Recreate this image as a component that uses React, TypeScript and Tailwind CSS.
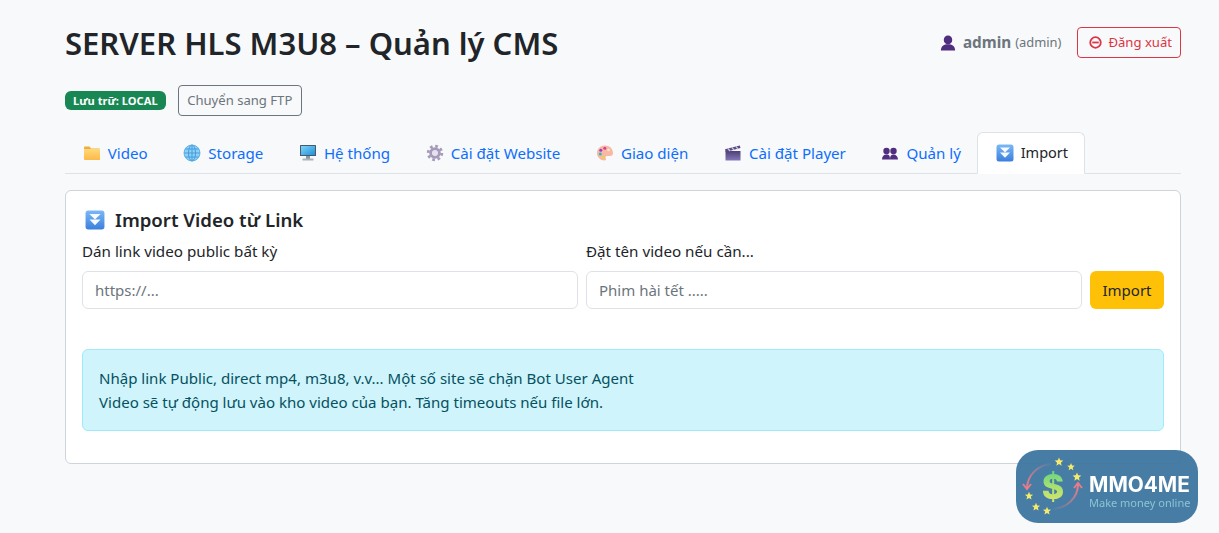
import React from "react";

const Tab = ({ icon, label, active }: { icon: React.ReactNode; label: string; active?: boolean }) => (
  <div className={active ? "flex items-center h-[42px] -ml-[2px] pl-[18px] pr-[16px] gap-[7px] text-[14.500px] rounded-t-[6px] border border-[#dee2e6] border-b-white bg-white text-[#212529] -mb-px" : "flex items-center h-[42px] pt-[2px] px-[17.800px] gap-[7px] text-[#0d6efd]"}>
    <span className="w-[18px] h-[18px] flex items-center justify-center">{icon}</span>
    <span>{label}</span>
  </div>
);

const Folder = () => (
  <svg width="18" height="18" viewBox="0 0 18 18">
    <defs><linearGradient id="fo" x1="0" y1="0" x2="0" y2="1"><stop offset="0" stopColor="#ffd978" /><stop offset="1" stopColor="#fdb94a" /></linearGradient></defs>
    <path d="M1 3.500a1 1 0 0 1 1-1h4.500l1.500 2h8a1 1 0 0 1 1 1V5.500H1z" fill="#f0ad3c" />
    <path d="M1 5h16v11H2a1 1 0 0 1-1-1z" fill="url(#fo)" />
  </svg>
);
const Globe = () => (
  <svg width="18" height="18" viewBox="0 0 18 18" fill="none">
    <circle cx="9" cy="9" r="8" fill="#8fd0f5" />
    <ellipse cx="9" cy="9" rx="3.500" ry="8" stroke="#3f98dc" strokeWidth=".9" />
    <path d="M9 1v16M1 9h16M2.200 5h13.600M2.200 13h13.600" stroke="#3f98dc" strokeWidth=".9" />
    <circle cx="9" cy="9" r="8" stroke="#4fa6e2" strokeWidth=".8" />
  </svg>
);
const Monitor = () => (
  <svg width="18" height="18" viewBox="0 0 18 18">
    <defs><linearGradient id="mo" x1="0" y1="0" x2="1" y2="1"><stop offset="0" stopColor="#7fd4f7" /><stop offset="1" stopColor="#1f8fdc" /></linearGradient></defs>
    <rect x="1" y="1" width="16" height="11" rx=".5" fill="#475a6c" />
    <rect x="2" y="2" width="14" height="9" fill="url(#mo)" />
    <rect x="7" y="12" width="4" height="3" fill="#8a96a2" />
    <rect x="3.500" y="14.500" width="11" height="2" rx=".5" fill="#aab4bd" />
  </svg>
);
const Gear = () => (
  <svg width="18" height="18" viewBox="0 0 18 18">
    <circle cx="9" cy="9" r="6.800" fill="none" stroke="#a69abb" strokeWidth="2.800" strokeDasharray="2.700 2.640" />
    <circle cx="9" cy="9" r="4.300" fill="none" stroke="#a69abb" strokeWidth="3" />
    <circle cx="9" cy="9" r="2.800" fill="#e5e0ee" />
  </svg>
);
const Palette = () => (
  <svg width="18" height="18" viewBox="0 0 18 18">
    <path d="M9 1.500C4.500 1.500 1 4.800 1 9s3.400 7.500 7.500 7.500c1.600 0 1.800-1.200 1.200-2.200-.7-1.200.1-2.300 1.400-2.300H14c1.900 0 3-1.300 3-3C17 4.500 13.500 1.500 9 1.500z" fill="#f7b9a3" />
    <circle cx="8.800" cy="4.300" r="1.500" fill="#e0399a" />
    <circle cx="4.800" cy="6.200" r="1.500" fill="#9a3fc4" />
    <circle cx="4.300" cy="10" r="1.500" fill="#2fb5c4" />
    <circle cx="7.300" cy="13.300" r="1.400" fill="#f0cf3c" />
    <circle cx="12.500" cy="6" r="1.300" fill="#fbe3da" />
  </svg>
);
const Clapper = () => (
  <svg width="18" height="18" viewBox="0 0 18 18">
    <defs><linearGradient id="cl" x1="0" y1="0" x2="0" y2="1"><stop offset="0" stopColor="#4d3f75" /><stop offset="1" stopColor="#8678b8" /></linearGradient></defs>
    <rect x="1.500" y="7" width="15" height="9.500" fill="url(#cl)" />
    <path d="M1 5.200l14.800-3.700.7 2.600L1.700 8z" fill="#5a4b85" />
    <path d="M4 4.500l2 2.700M8 3.500l2 2.700M12 2.500l2 2.700" stroke="#c9c2df" strokeWidth="1.300" />
  </svg>
);
const People = () => (
  <svg width="18" height="18" viewBox="0 0 18 18" fill="#4f2d7f">
    <circle cx="5.500" cy="7" r="3.200" />
    <circle cx="12.500" cy="7" r="3.200" />
    <path d="M1 15.500c0-3 1.500-5 4.500-5s3.500 1.500 3.500 5zM9 15.500c0-3.500 1-5 3.500-5s4.500 2 4.500 5z" />
  </svg>
);
const DoubleDown = ({ s = 18 }: { s?: number }) => (
  <svg width={s} height={s} viewBox="0 0 18 18">
    <defs><linearGradient id={`dd${s}`} x1="0" y1="0" x2="0" y2="1"><stop offset="0" stopColor="#7cb8f5" /><stop offset="1" stopColor="#3a7fdc" /></linearGradient></defs>
    <rect x="0.500" y="0.500" width="17" height="17" rx="2.500" fill={`url(#dd${s})`} />
    <path d="M4 3.500h10L9 8.500z" fill="#f7fbff" />
    <path d="M4 8.500h10L9 13.800z" fill="#f7fbff" />
  </svg>
);
const Star = ({ x, y, r = 4 }: { x: number; y: number; r?: number }) => {
  const pts = Array.from({ length: 10 }, (_, i) => {
    const a = -Math.PI / 2 + (i * Math.PI) / 5;
    const q = i % 2 ? r * 0.45 : r;
    return `${x + q * Math.cos(a)},${y + q * Math.sin(a)}`;
  }).join(" ");
  return <polygon points={pts} fill="#f6ea6c" />;
};

export default function App() {
  return (
    <div className="min-h-[533px] bg-[#f8f9fa] px-[65px] text-[15.100px] text-[#212529] font-['Noto_Sans','Open_Sans',sans-serif]">
      <div className="w-[1116px]">
        <header className="flex items-start justify-between pt-[21px] h-[85px]">
          <h1 className="text-[31px] leading-[44px] font-semibold">SERVER HLS M3U8 – Quản lý CMS</h1>
          <div className="flex items-center gap-[16px] pt-[6px]">
            <div className="flex items-center text-[#6c757d]">
              <svg width="16" height="16" viewBox="0 0 18 18" fill="#4f2d7f" className="mr-[7px]">
                <circle cx="9" cy="5.500" r="4.800" />
                <path d="M1 17.500c0-5 3.500-7 8-7s8 2 8 7z" />
              </svg>
              <span className="text-[15.300px] font-bold mr-[4px]">admin</span>
              <span className="text-[12.900px]">(admin)</span>
            </div>
            <button className="flex items-center gap-[6px] h-[31px] pl-[11px] pr-[8px] text-[13.100px] text-[#dc3545] border border-[#dc3545] rounded-[4px]">
              <svg width="13" height="13" viewBox="0 0 16 16" fill="none" stroke="#dc3545" strokeWidth="2.200">
                <circle cx="8" cy="8" r="6.500" />
                <path d="M4 8h8" />
              </svg>
              Đăng xuất
            </button>
          </div>
        </header>
        <div className="flex items-center gap-[12px] h-[31px]">
          <span className="px-[8px] py-[3px] rounded-[6px] bg-[#198754] text-white text-[11.100px] leading-[13px] font-bold">Lưu trữ: LOCAL</span>
          <button className="h-[31px] px-[8.500px] text-[13.100px] text-[#6c757d] border border-[#6c757d] rounded-[4px]">Chuyển sang FTP</button>
        </div>
        <nav className="flex items-end h-[42px] mt-[16px] border-b border-[#dee2e6]">
          <Tab icon={<Folder />} label="Video" />
          <Tab icon={<Globe />} label="Storage" />
          <Tab icon={<Monitor />} label="Hệ thống" />
          <Tab icon={<Gear />} label="Cài đặt Website" />
          <Tab icon={<Palette />} label="Giao diện" />
          <Tab icon={<Clapper />} label="Cài đặt Player" />
          <Tab icon={<People />} label="Quản lý" />
          <Tab icon={<DoubleDown />} label="Import" active />
        </nav>
        <section className="mt-[16px] h-[274px] bg-white border border-[#ced4da] rounded-[6px] px-[16px] pt-[15px]">
          <h2 className="flex items-center gap-[10px] pl-[3px] text-[18.600px] leading-[27px] font-semibold">
            <DoubleDown s={20} />
            Import Video từ Link
          </h2>
          <div className="flex items-end gap-[8px] mt-[6px]">
            <label className="flex-1">
              <div className="text-[15.200px] leading-[24px] mb-[8px]">Dán link video public bất kỳ</div>
              <input readOnly placeholder="https://..." className="w-full h-[38px] px-[12px] text-[15px] border border-[#dee2e6] rounded-[6px] bg-white placeholder:text-[#6c757d] outline-none" />
            </label>
            <label className="flex-1">
              <div className="text-[15.200px] leading-[24px] mb-[8px]">Đặt tên video nếu cần...</div>
              <input readOnly placeholder="Phim hài tết ....." className="w-full h-[38px] px-[12px] text-[15px] border border-[#dee2e6] rounded-[6px] bg-white placeholder:text-[#6c757d] outline-none" />
            </label>
            <button className="h-[38px] w-[74px] bg-[#ffc107] rounded-[6px] text-[15px] text-[#212529]">Import</button>
          </div>
          <div className="mt-[40px] h-[82px] px-[16px] py-[16px] bg-[#cff4fc] border border-[#9eeaf9] rounded-[6px] text-[#055160] text-[15.050px] leading-[24px]">
            <div>Nhập link Public, direct mp4, m3u8, v.v... Một số site sẽ chặn Bot User Agent</div>
            <div>Video sẽ tự động lưu vào kho video của bạn. Tăng timeouts nếu file lớn.</div>
          </div>
        </section>
      </div>
      <div className="fixed left-[1016px] top-[450px] w-[182px] h-[73px] rounded-[22px] bg-[#3d769f]/95 flex items-center overflow-hidden">
        <svg width="73" height="73" viewBox="0 0 73 73" className="shrink-0" fill="none">
          <defs>
            <linearGradient id="dl" x1="0" y1="0" x2="0" y2="1"><stop offset="0" stopColor="#4fd08a" /><stop offset=".5" stopColor="#a8e070" /><stop offset="1" stopColor="#e4e86a" /></linearGradient>
            <linearGradient id="a1" x1="1" y1="0" x2="0" y2="1"><stop offset="0" stopColor="#4f7fa6" /><stop offset="1" stopColor="#f27a88" /></linearGradient>
            <linearGradient id="a2" x1="0" y1="1" x2="1" y2="0"><stop offset="0" stopColor="#4f7fa6" /><stop offset="1" stopColor="#f27a88" /></linearGradient>
          </defs>
          <path d="M35 14C22 15 11 25 11 39" stroke="url(#a1)" strokeWidth="2" />
          <path d="M7 34l4 5 4-5" stroke="#f27a88" strokeWidth="1.800" />
          <path d="M37 59c14-1 25-11 25-25" stroke="url(#a2)" strokeWidth="2" />
          <path d="M58 38l4-5 4 5" stroke="#f27a88" strokeWidth="1.800" />
          <text x="37" y="49" textAnchor="middle" fontSize="34" fontWeight="800" fill="url(#dl)" fontFamily="'Inter',sans-serif">$</text>
          <Star x={43} y={12} r={4.500} />
          <Star x={55} y={17} r={4} />
          <Star x={61} y={27} r={4.500} />
          <Star x={13} y={46} r={4.300} />
          <Star x={20} y={57} r={4.300} />
          <Star x={31} y={61} r={4.300} />
        </svg>
        <div className="flex flex-col pt-[12px]">
          <span className="text-[20.800px] leading-[20px] font-bold text-white font-['Inter',sans-serif]">MMO4ME</span>
          <span className="text-[11px] leading-[15px] text-[#8cc4d2]">Make money online</span>
        </div>
      </div>
    </div>
  );
}
